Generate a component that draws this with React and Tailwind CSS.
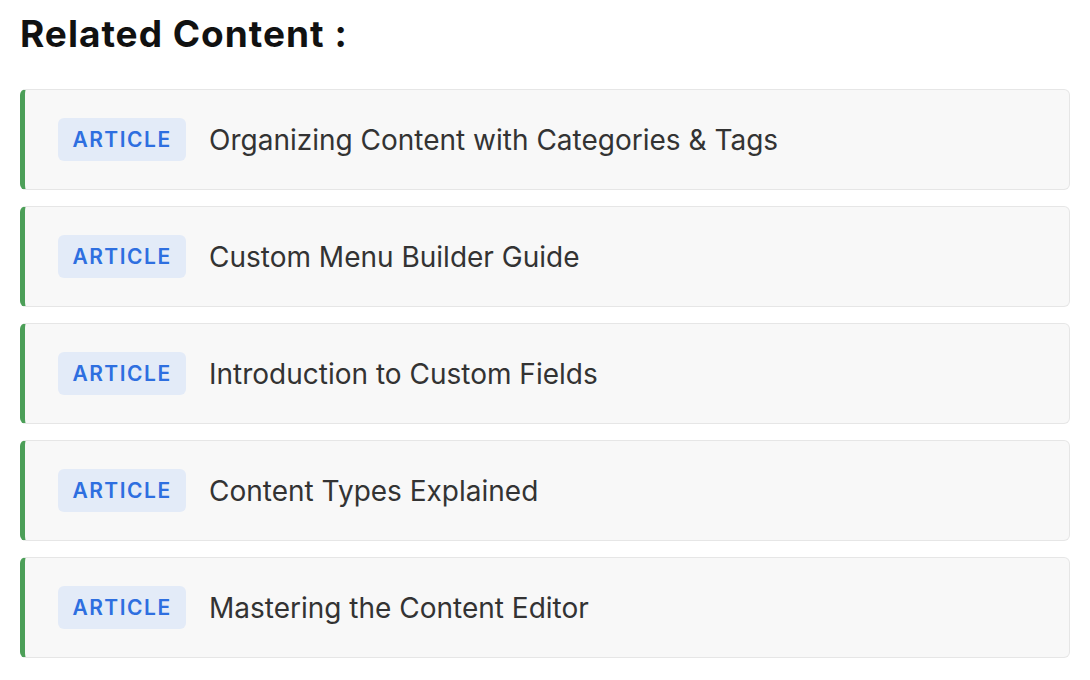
export default function App() {
  const items = [
    "Organizing Content with Categories & Tags",
    "Custom Menu Builder Guide",
    "Introduction to Custom Fields",
    "Content Types Explained",
    "Mastering the Content Editor",
  ];
  return (
    <div className="w-[1090px] h-[680px] bg-white" style={{ fontFamily: "Inter, 'Noto Sans', sans-serif" }}>
      <div className="pl-5 pr-[20px] pt-[12px]">
        <h2 className="text-[37px] leading-[44px] font-bold text-[#111] tracking-[1px]">Related Content :</h2>
        <div className="mt-[33px] flex flex-col gap-[16px]">
          {items.map((t) => (
            <div
              key={t}
              className="flex items-center gap-[23px] h-[101px] bg-[#f8f8f8] border border-[#e6e6e6] border-l-[5px] border-l-[#4c9f58] rounded-[6px] pl-[33px]"
            >
              <span className="inline-flex items-center justify-center h-[43px] w-[128px] rounded-[6px] bg-[#e3ebf8] text-[#2e6fe0] text-[21px] font-semibold tracking-[1.5px]">
                ARTICLE
              </span>
              <span className="text-[28px] text-[#333]">{t}</span>
            </div>
          ))}
        </div>
      </div>
    </div>
  );
}
